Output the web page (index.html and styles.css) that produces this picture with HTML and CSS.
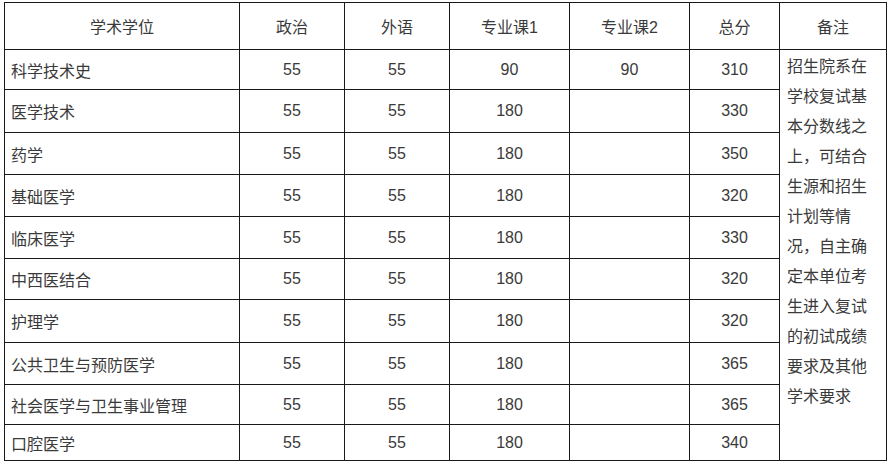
FILE: index.html
```html
<!DOCTYPE html>
<html lang="zh">
<head>
<meta charset="utf-8">
<title>学术学位</title>
<link rel="stylesheet" href="styles.css">
</head>
<body>
<table class="grid">
  <colgroup>
    <col class="c-name">
    <col class="c-num">
    <col class="c-num">
    <col class="c-major">
    <col class="c-major">
    <col class="c-total">
    <col class="c-note">
  </colgroup>
  <tr class="head">
    <td>学术学位</td><td>政治</td><td>外语</td><td>专业课1</td><td>专业课2</td><td>总分</td><td>备注</td>
  </tr>
  <tr class="r1">
    <td class="name">科学技术史</td><td>55</td><td>55</td><td>90</td><td>90</td><td>310</td>
    <td class="note" rowspan="10">招生院系在学校复试基本分数线之上，可结合生源和招生计划等情况，自主确定本单位考生进入复试的初试成绩要求及其他学术要求</td>
  </tr>
  <tr class="r2"><td class="name">医学技术</td><td>55</td><td>55</td><td>180</td><td></td><td>330</td></tr>
  <tr class="r3"><td class="name">药学</td><td>55</td><td>55</td><td>180</td><td></td><td>350</td></tr>
  <tr class="r4"><td class="name">基础医学</td><td>55</td><td>55</td><td>180</td><td></td><td>320</td></tr>
  <tr class="r5"><td class="name">临床医学</td><td>55</td><td>55</td><td>180</td><td></td><td>330</td></tr>
  <tr class="r6"><td class="name">中西医结合</td><td>55</td><td>55</td><td>180</td><td></td><td>320</td></tr>
  <tr class="r7"><td class="name">护理学</td><td>55</td><td>55</td><td>180</td><td></td><td>320</td></tr>
  <tr class="r8"><td class="name">公共卫生与预防医学</td><td>55</td><td>55</td><td>180</td><td></td><td>365</td></tr>
  <tr class="r9"><td class="name">社会医学与卫生事业管理</td><td>55</td><td>55</td><td>180</td><td></td><td>365</td></tr>
  <tr class="r10"><td class="name">口腔医学</td><td>55</td><td>55</td><td>180</td><td></td><td>340</td></tr>
</table>
</body>
</html>
```

FILE: styles.css
```css
html, body {
  margin: 0;
  padding: 0;
  background: #ffffff;
}

.grid {
  margin: 2px 0 0 4px;
  width: 883px;
  table-layout: fixed;
  border-collapse: separate;
  border-spacing: 0;
  border-top: 1px solid #1a1a1a;
  border-left: 1px solid #1a1a1a;
  font-family: "Liberation Sans", "Noto Sans CJK SC", sans-serif;
  font-size: 16px;
  color: #3a3a3a;
}

.c-name { width: 235px; }
.c-num { width: 105px; }
.c-major { width: 120px; }
.c-total { width: 90px; }
.c-note { width: 107px; }

.grid td {
  box-sizing: border-box;
  border-right: 1px solid #1a1a1a;
  border-bottom: 1px solid #1a1a1a;
  padding: 0;
  text-align: center;
  vertical-align: middle;
  white-space: nowrap;
}

.grid td.name {
  text-align: left;
  padding-left: 6px;
}

.grid td.note {
  text-align: left;
  vertical-align: top;
  white-space: normal;
  line-height: 30px;
  padding: 2px 10px 0 7px;
  word-break: break-all;
}

.head td { height: 47px; }
.r1 td { height: 40px; }
.r2 td { height: 43px; }
.r3 td { height: 42px; }
.r4 td { height: 42px; }
.r5 td { height: 42px; }
.r6 td { height: 41px; }
.r7 td { height: 43px; }
.r8 td { height: 42px; }
.r9 td { height: 40px; }
.r10 td { height: 36px; }
```
